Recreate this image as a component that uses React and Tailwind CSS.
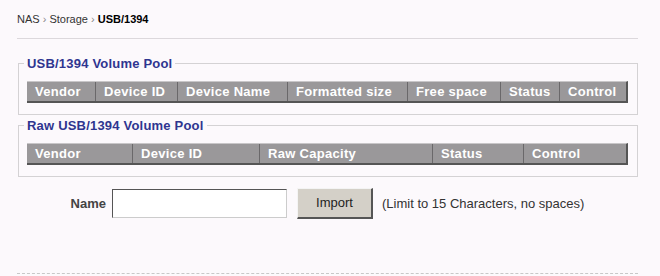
import React from "react";

const poolCols = [
  { label: "Vendor", w: "w-[68px]" },
  { label: "Device ID", w: "w-[82px]" },
  { label: "Device Name", w: "w-[110px]" },
  { label: "Formatted size", w: "w-[120px]" },
  { label: "Free space", w: "w-[93px]" },
  { label: "Status", w: "w-[59px]" },
  { label: "Control", w: "flex-1" },
];

const rawCols = [
  { label: "Vendor", w: "w-[105px]" },
  { label: "Device ID", w: "w-[127px]" },
  { label: "Raw Capacity", w: "w-[173px]" },
  { label: "Status", w: "w-[91px]" },
  { label: "Control", w: "flex-1" },
];

// grey column header bar, dark shadow on bottom/right
const HeaderTable = ({ cols }) => (
  <div className="flex w-[601px] h-[22px] bg-[#9a989a] border-t border-t-[#c8c6c8] border-b-2 border-b-[#555] border-r-2 border-r-[#555]">
    {cols.map((c, i) => (
      <div
        key={c.label}
        className={`${c.w} ${i > 0 ? "border-l border-l-[#6a686a]" : ""} flex items-center pl-[8px] whitespace-nowrap text-white font-bold text-[13px] tracking-[0.3px]`}
      >
        {c.label}
      </div>
    ))}
  </div>
);

const Pool = ({ title, cols, className }) => (
  <fieldset className={`border border-[#d4d2d4] w-[620px] ml-[18px] pl-[8px] pb-[11px] ${className}`}>
    <legend className="px-[3px] -ml-[3px] leading-[15px] text-[#2f3590] font-bold text-[13px] tracking-[0.2px]">
      {title}
    </legend>
    <div className="pt-[10px]">
      <HeaderTable cols={cols} />
    </div>
  </fieldset>
);

export default function App() {
  return (
    <div className="w-[660px] h-[276px] bg-[#fcf9fc] overflow-hidden font-['Liberation_Sans',Arial,sans-serif]">
      <div className="h-[38px] pt-[13px] pl-[17px] text-[11px] leading-[13px] text-[#333]">
        NAS <span className="text-[#888]">›</span> Storage <span className="text-[#888]">›</span>{" "}
        <span className="font-bold text-black">USB/1394</span>
      </div>
      <div className="ml-[17px] w-[621px] border-t border-[#dcd8dc]" />
      <Pool title="USB/1394 Volume Pool" cols={poolCols} className="mt-[17px]" />
      <Pool title="Raw USB/1394 Volume Pool" cols={rawCols} className="mt-[3px]" />
      <div className="flex items-center mt-[11px] h-[31px]">
        <label className="w-[112px] text-right pr-[6px] font-bold text-[13px] text-[#444]">Name</label>
        <input
          type="text"
          className="w-[175px] h-[29px] bg-white border border-t-[#555] border-l-[#555] border-b-[#ccc] border-r-[#ccc] outline-none"
        />
        <button className="ml-[10px] w-[76px] h-[31px] bg-[#d4d0c8] border border-t-[#f4f4f4] border-l-[#f4f4f4] border-b-2 border-r-2 border-b-[#555] border-r-[#555] text-[13px] text-[#222]">
          Import
        </button>
        <span className="ml-[9px] text-[13px] text-[#333]">(Limit to 15 Characters, no spaces)</span>
      </div>
      <div className="ml-[17px] w-[621px] mt-[54px] border-t border-dashed border-[#c8c8c8]" />
    </div>
  );
}
